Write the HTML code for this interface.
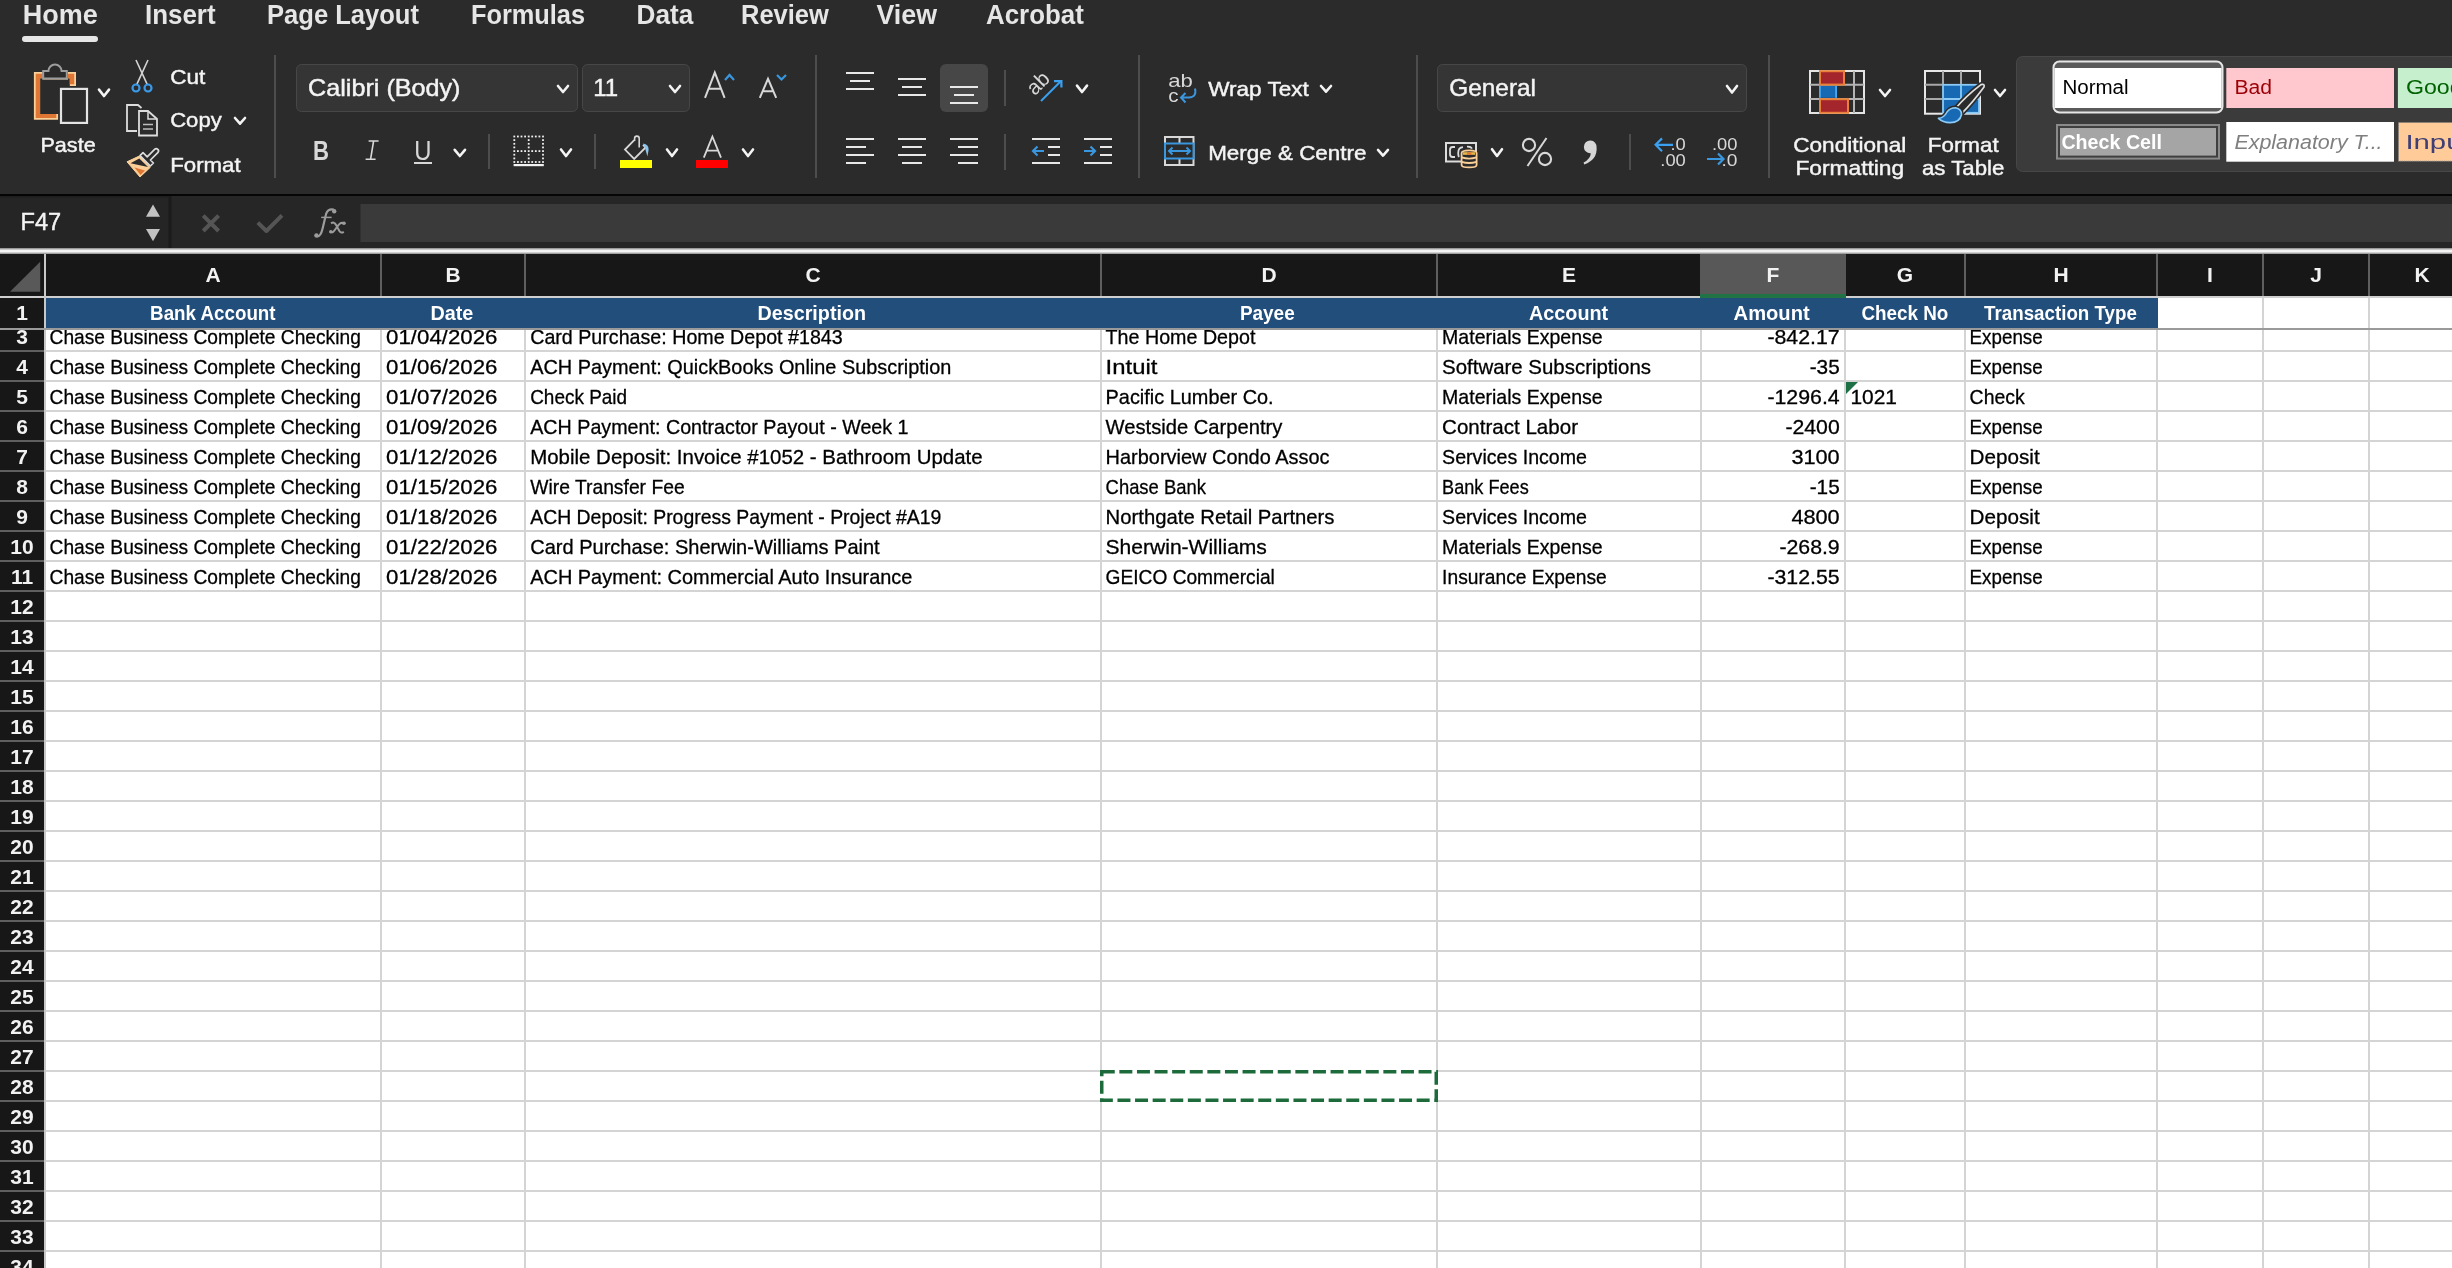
<!DOCTYPE html>
<html><head><meta charset="utf-8"><title>Excel</title>
<style>html,body{margin:0;padding:0;background:#2b2b2b;width:2452px;height:1268px;overflow:hidden}
text{white-space:pre}</style></head>
<body><svg width="2452" height="1268" viewBox="0 0 2452 1268" style="display:block;will-change:transform"><defs><clipPath id="cellclip"><rect x="0" y="330" width="2452" height="938"/></clipPath><clipPath id="rowclip"><rect x="0" y="330" width="44" height="20"/></clipPath></defs><rect x="0" y="0" width="2452" height="194" fill="#2b2b2b" />
<rect x="0" y="194" width="2452" height="2" fill="#050505" />
<rect x="0" y="196" width="2452" height="52" fill="#262626" />
<text x="22.7" y="24.0" font-family="Liberation Sans" font-size="27" font-weight="bold" font-style="normal" fill="#e6e6e6" textLength="75.0" lengthAdjust="spacingAndGlyphs" >Home</text>
<text x="145.0" y="24.0" font-family="Liberation Sans" font-size="27" font-weight="bold" font-style="normal" fill="#e6e6e6" textLength="70.6" lengthAdjust="spacingAndGlyphs" >Insert</text>
<text x="267.0" y="24.0" font-family="Liberation Sans" font-size="27" font-weight="bold" font-style="normal" fill="#e6e6e6" textLength="152.0" lengthAdjust="spacingAndGlyphs" >Page Layout</text>
<text x="470.9" y="24.0" font-family="Liberation Sans" font-size="27" font-weight="bold" font-style="normal" fill="#e6e6e6" textLength="114.2" lengthAdjust="spacingAndGlyphs" >Formulas</text>
<text x="636.6" y="24.0" font-family="Liberation Sans" font-size="27" font-weight="bold" font-style="normal" fill="#e6e6e6" textLength="56.7" lengthAdjust="spacingAndGlyphs" >Data</text>
<text x="741.0" y="24.0" font-family="Liberation Sans" font-size="27" font-weight="bold" font-style="normal" fill="#e6e6e6" textLength="87.8" lengthAdjust="spacingAndGlyphs" >Review</text>
<text x="876.5" y="24.0" font-family="Liberation Sans" font-size="27" font-weight="bold" font-style="normal" fill="#e6e6e6" textLength="60.5" lengthAdjust="spacingAndGlyphs" >View</text>
<text x="986.0" y="24.0" font-family="Liberation Sans" font-size="27" font-weight="bold" font-style="normal" fill="#e6e6e6" textLength="97.8" lengthAdjust="spacingAndGlyphs" >Acrobat</text>
<rect x="22" y="36" width="76" height="6" rx="3" fill="#e6e6e6"/>
<path d="M33.9 72 H42.5 V79.5 H68 V72 H76 V86 H69.8 V78.2 H40.1 V113.9 H58.1 V119.8 H33.9 Z" fill="#fbcf98"/>
<path d="M35.7 73.8 H42.5 V78.2 H40.1 V113.9 H56.3 V118 H35.7 Z M68 73.8 H74.2 V84.3 H69.8 V78.2 H68 Z" fill="#e07634"/>
<path d="M43.2 78.5 V71.1 H48.4 A6.6 6.6 0 0 1 61.6 71.1 H66.8 V78.5 Z" fill="#2b2b2b" stroke="#9d9d9d" stroke-width="2"/>
<rect x="61" y="88.9" width="26" height="34" fill="#2b2b2b" stroke="#e4e4e4" stroke-width="2.2"/>
<polyline points="99,89.6 104.0,96 109,89.6" fill="none" stroke="#f4f4f4" stroke-width="2.6" stroke-linecap="round" stroke-linejoin="round"/>
<text x="40.4" y="151.6" font-family="Liberation Sans" font-size="21" font-weight="normal" font-style="normal" fill="#f4f4f4" stroke="#f4f4f4" stroke-width="0.45" textLength="55.3" lengthAdjust="spacingAndGlyphs" >Paste</text>
<path d="M136 60 L147.2 84.4 M148 60 L136.8 84.4" stroke="#d4d4d4" stroke-width="1.6" fill="none"/>
<circle cx="136" cy="88" r="3.5" fill="#2b2b2b" stroke="#3a9ae8" stroke-width="2.2"/>
<circle cx="148" cy="88" r="3.5" fill="#2b2b2b" stroke="#3a9ae8" stroke-width="2.2"/>
<text x="170.2" y="83.7" font-family="Liberation Sans" font-size="21" font-weight="normal" font-style="normal" fill="#f4f4f4" stroke="#f4f4f4" stroke-width="0.45" textLength="35.1" lengthAdjust="spacingAndGlyphs" >Cut</text>
<path d="M137 131 H127 V105 H138 L141.5 108" fill="none" stroke="#dcdcdc" stroke-width="1.8"/>
<path d="M139 111 H148 L157 119 V135.5 H139 Z" fill="#2b2b2b" stroke="#dcdcdc" stroke-width="1.8"/>
<path d="M148 111 V119 H157" fill="none" stroke="#dcdcdc" stroke-width="1.5"/>
<path d="M143 124.5 H153 M143 129 H153" stroke="#bdbdbd" stroke-width="1.6"/>
<text x="170.2" y="127.3" font-family="Liberation Sans" font-size="21" font-weight="normal" font-style="normal" fill="#f4f4f4" stroke="#f4f4f4" stroke-width="0.45" textLength="51.5" lengthAdjust="spacingAndGlyphs" >Copy</text>
<polyline points="235,118 240.0,123.7 245,118" fill="none" stroke="#f4f4f4" stroke-width="2.6" stroke-linecap="round" stroke-linejoin="round"/>
<path d="M127 161.8 L139.2 156.1 L150.2 167.4 L140 177 Z" fill="#fbcf98" stroke="#fbcf98" stroke-width="1" stroke-linejoin="round"/>
<path d="M130.5 163.2 L139.3 158.6 L148 166.9 Z" fill="#2b2b2b"/>
<path d="M134.5 167.6 L145 170.5 L140.5 175 Z" fill="#e07634"/>
<path d="M140 155.6 L143 152.6 L147.2 156.8 L154.6 149.4 Q156.2 147.8 157.8 149.4 Q159.4 151 157.8 152.6 L150.4 160 L153.4 163 L150.4 166 Z" fill="#2b2b2b" stroke="#dcdcdc" stroke-width="1.7" stroke-linejoin="round"/>
<text x="170.2" y="171.9" font-family="Liberation Sans" font-size="21" font-weight="normal" font-style="normal" fill="#f4f4f4" stroke="#f4f4f4" stroke-width="0.45" textLength="70.5" lengthAdjust="spacingAndGlyphs" >Format</text>
<rect x="274" y="55" width="2" height="123" fill="#4d4d4d" />
<rect x="296.5" y="64.5" width="281" height="47" rx="5" fill="#353535" stroke="#474747" stroke-width="1"/>
<text x="308.1" y="96.0" font-family="Liberation Sans" font-size="24" font-weight="normal" font-style="normal" fill="#f4f4f4" stroke="#f4f4f4" stroke-width="0.45" textLength="152.4" lengthAdjust="spacingAndGlyphs" >Calibri (Body)</text>
<polyline points="558,86 563.0,92 568,86" fill="none" stroke="#f4f4f4" stroke-width="2.6" stroke-linecap="round" stroke-linejoin="round"/>
<rect x="582.5" y="64.5" width="107" height="47" rx="5" fill="#353535" stroke="#474747" stroke-width="1"/>
<text x="593.2" y="96.4" font-family="Liberation Sans" font-size="24" font-weight="normal" font-style="normal" fill="#f4f4f4" stroke="#f4f4f4" stroke-width="0.45" >11</text>
<polyline points="670,86 675.0,92 680,86" fill="none" stroke="#f4f4f4" stroke-width="2.6" stroke-linecap="round" stroke-linejoin="round"/>
<path d="M705 97.8 L714.8 72.6 L724.6 97.8 M708.6 88.8 H721" fill="none" stroke="#d8d8d8" stroke-width="2"/>
<polyline points="725,80 729.5,75 734,80" fill="none" stroke="#3a96dd" stroke-width="2.2"/>
<path d="M759.8 97.8 L768 78.8 L776.2 97.8 M762.8 91.2 H773.2" fill="none" stroke="#d8d8d8" stroke-width="2"/>
<polyline points="777,75 781.5,79.5 786,75" fill="none" stroke="#3a96dd" stroke-width="2.2"/>
<text x="312.9" y="160.0" font-family="Liberation Sans" font-size="28" font-weight="bold" font-style="normal" fill="#d8d8d8" textLength="16.0" lengthAdjust="spacingAndGlyphs" >B</text>
<path d="M368.6 141 H378.6 M365.6 159.2 H375.6 M373.6 141 L370.6 159.2" fill="none" stroke="#d8d8d8" stroke-width="1.6"/>
<text x="414.2" y="159.6" font-family="Liberation Sans" font-size="27" font-weight="normal" font-style="normal" fill="#d8d8d8" textLength="17.2" lengthAdjust="spacingAndGlyphs" >U</text>
<rect x="414" y="162" width="18" height="2" fill="#d8d8d8" />
<polyline points="454.7,149.8 459.85,156 465,149.8" fill="none" stroke="#f4f4f4" stroke-width="2.6" stroke-linecap="round" stroke-linejoin="round"/>
<rect x="488" y="134" width="2" height="35" fill="#4d4d4d" />
<rect x="513.4" y="135.6" width="1.8" height="1.8" fill="#f0f0f0" />
<rect x="513.4" y="139.2" width="1.8" height="1.8" fill="#f0f0f0" />
<rect x="513.4" y="142.9" width="1.8" height="1.8" fill="#f0f0f0" />
<rect x="513.4" y="146.5" width="1.8" height="1.8" fill="#f0f0f0" />
<rect x="513.4" y="150.2" width="1.8" height="1.8" fill="#f0f0f0" />
<rect x="513.4" y="153.8" width="1.8" height="1.8" fill="#f0f0f0" />
<rect x="513.4" y="157.5" width="1.8" height="1.8" fill="#f0f0f0" />
<rect x="513.4" y="161.1" width="1.8" height="1.8" fill="#f0f0f0" />
<rect x="517.0" y="135.6" width="1.8" height="1.8" fill="#f0f0f0" />
<rect x="517.0" y="150.2" width="1.8" height="1.8" fill="#f0f0f0" />
<rect x="517.0" y="161.1" width="1.8" height="1.8" fill="#f0f0f0" />
<rect x="520.6" y="135.6" width="1.8" height="1.8" fill="#f0f0f0" />
<rect x="520.6" y="150.2" width="1.8" height="1.8" fill="#f0f0f0" />
<rect x="520.6" y="161.1" width="1.8" height="1.8" fill="#f0f0f0" />
<rect x="524.2" y="135.6" width="1.8" height="1.8" fill="#f0f0f0" />
<rect x="524.2" y="150.2" width="1.8" height="1.8" fill="#f0f0f0" />
<rect x="524.2" y="161.1" width="1.8" height="1.8" fill="#f0f0f0" />
<rect x="527.8" y="135.6" width="1.8" height="1.8" fill="#f0f0f0" />
<rect x="527.8" y="139.2" width="1.8" height="1.8" fill="#f0f0f0" />
<rect x="527.8" y="142.9" width="1.8" height="1.8" fill="#f0f0f0" />
<rect x="527.8" y="146.5" width="1.8" height="1.8" fill="#f0f0f0" />
<rect x="527.8" y="150.2" width="1.8" height="1.8" fill="#f0f0f0" />
<rect x="527.8" y="153.8" width="1.8" height="1.8" fill="#f0f0f0" />
<rect x="527.8" y="157.5" width="1.8" height="1.8" fill="#f0f0f0" />
<rect x="527.8" y="161.1" width="1.8" height="1.8" fill="#f0f0f0" />
<rect x="531.3" y="135.6" width="1.8" height="1.8" fill="#f0f0f0" />
<rect x="531.3" y="150.2" width="1.8" height="1.8" fill="#f0f0f0" />
<rect x="531.3" y="161.1" width="1.8" height="1.8" fill="#f0f0f0" />
<rect x="534.9" y="135.6" width="1.8" height="1.8" fill="#f0f0f0" />
<rect x="534.9" y="150.2" width="1.8" height="1.8" fill="#f0f0f0" />
<rect x="534.9" y="161.1" width="1.8" height="1.8" fill="#f0f0f0" />
<rect x="538.5" y="135.6" width="1.8" height="1.8" fill="#f0f0f0" />
<rect x="538.5" y="150.2" width="1.8" height="1.8" fill="#f0f0f0" />
<rect x="538.5" y="161.1" width="1.8" height="1.8" fill="#f0f0f0" />
<rect x="542.1" y="135.6" width="1.8" height="1.8" fill="#f0f0f0" />
<rect x="542.1" y="139.2" width="1.8" height="1.8" fill="#f0f0f0" />
<rect x="542.1" y="142.9" width="1.8" height="1.8" fill="#f0f0f0" />
<rect x="542.1" y="146.5" width="1.8" height="1.8" fill="#f0f0f0" />
<rect x="542.1" y="150.2" width="1.8" height="1.8" fill="#f0f0f0" />
<rect x="542.1" y="153.8" width="1.8" height="1.8" fill="#f0f0f0" />
<rect x="542.1" y="157.5" width="1.8" height="1.8" fill="#f0f0f0" />
<rect x="542.1" y="161.1" width="1.8" height="1.8" fill="#f0f0f0" />
<rect x="513.6" y="164" width="30.2" height="2.2" fill="#f2f2f2" />
<polyline points="561,149.5 566.0,156 571,149.5" fill="none" stroke="#f4f4f4" stroke-width="2.6" stroke-linecap="round" stroke-linejoin="round"/>
<rect x="594" y="134" width="2" height="35" fill="#4d4d4d" />
<path d="M634.2 140.2 L625 149.6 L634.2 158.9 L645.6 147.5 L643 144.9" fill="none" stroke="#d8d8d8" stroke-width="1.8" stroke-linejoin="miter"/>
<path d="M634.6 141 V138.4 A2.3 2.3 0 0 1 639.2 138.4 V147.4" fill="none" stroke="#d8d8d8" stroke-width="1.6"/>
<path d="M643.2 143.6 Q648.8 144.2 648.6 150 L647.4 156.4 Q645.8 150 643.2 143.6 Z" fill="#8cc4ec"/>
<rect x="620" y="160" width="32" height="8" fill="#ffff00" />
<polyline points="667,149.5 672.0,156 677,149.5" fill="none" stroke="#f4f4f4" stroke-width="2.6" stroke-linecap="round" stroke-linejoin="round"/>
<path d="M703.8 157.6 L712.4 136.6 L721 157.6 M706.8 150.6 H718" fill="none" stroke="#d8d8d8" stroke-width="1.8"/>
<rect x="696" y="160" width="32" height="8" fill="#ff0000" />
<polyline points="743,149.5 748.0,156 753,149.5" fill="none" stroke="#f4f4f4" stroke-width="2.6" stroke-linecap="round" stroke-linejoin="round"/>
<rect x="815" y="55" width="2" height="123" fill="#4d4d4d" />
<rect x="846" y="72" width="28" height="2" fill="#e8e8e8" />
<rect x="850" y="80" width="20" height="2" fill="#e8e8e8" />
<rect x="846" y="88" width="28" height="2" fill="#e8e8e8" />
<rect x="898" y="78" width="28" height="2" fill="#e8e8e8" />
<rect x="902" y="86" width="20" height="2" fill="#e8e8e8" />
<rect x="898" y="94" width="28" height="2" fill="#e8e8e8" />
<rect x="940" y="64" width="48" height="48" rx="6" fill="#474747"/>
<rect x="950" y="86" width="28" height="2" fill="#e8e8e8" />
<rect x="954" y="94" width="20" height="2" fill="#e8e8e8" />
<rect x="950" y="102" width="28" height="2" fill="#e8e8e8" />
<rect x="1004" y="70" width="2" height="36" fill="#4d4d4d" />
<text x="0" y="0" font-family="Liberation Sans" font-size="21" fill="#d8d8d8" textLength="23" lengthAdjust="spacingAndGlyphs" transform="translate(1034.8 96.2) rotate(-45)">ab</text>
<path d="M1041 101 L1060.5 81.5" stroke="#3aa0ef" stroke-width="2" fill="none"/>
<polyline points="1054,81.2 1061.4,81.2 1061.4,87.6" fill="none" stroke="#3aa0ef" stroke-width="2.2"/>
<polyline points="1077,85.6 1082.0,92 1087,85.6" fill="none" stroke="#f4f4f4" stroke-width="2.6" stroke-linecap="round" stroke-linejoin="round"/>
<rect x="846" y="138" width="28" height="2" fill="#e8e8e8" />
<rect x="846" y="146" width="20" height="2" fill="#e8e8e8" />
<rect x="846" y="154" width="28" height="2" fill="#e8e8e8" />
<rect x="846" y="162" width="20" height="2" fill="#e8e8e8" />
<rect x="898" y="138" width="28" height="2" fill="#e8e8e8" />
<rect x="902" y="146" width="20" height="2" fill="#e8e8e8" />
<rect x="898" y="154" width="28" height="2" fill="#e8e8e8" />
<rect x="902" y="162" width="20" height="2" fill="#e8e8e8" />
<rect x="950" y="138" width="28" height="2" fill="#e8e8e8" />
<rect x="958" y="146" width="20" height="2" fill="#e8e8e8" />
<rect x="950" y="154" width="28" height="2" fill="#e8e8e8" />
<rect x="958" y="162" width="20" height="2" fill="#e8e8e8" />
<rect x="1004" y="134" width="2" height="36" fill="#4d4d4d" />
<rect x="1032" y="138" width="28" height="2" fill="#e8e8e8" />
<rect x="1048" y="146" width="12" height="2" fill="#e8e8e8" />
<rect x="1048" y="154" width="12" height="2" fill="#e8e8e8" />
<rect x="1032" y="162" width="28" height="2" fill="#e8e8e8" />
<path d="M1033 151 H1044 M1037.5 146.5 L1033 151 L1037.5 155.5" stroke="#3a96dd" stroke-width="2.2" fill="none"/>
<rect x="1084" y="138" width="28" height="2" fill="#e8e8e8" />
<rect x="1100" y="146" width="12" height="2" fill="#e8e8e8" />
<rect x="1100" y="154" width="12" height="2" fill="#e8e8e8" />
<rect x="1084" y="162" width="28" height="2" fill="#e8e8e8" />
<path d="M1084 151 H1095 M1090.5 146.5 L1095 151 L1090.5 155.5" stroke="#3a96dd" stroke-width="2.2" fill="none"/>
<rect x="1138" y="55" width="2" height="123" fill="#4d4d4d" />
<text x="1168.2" y="87.0" font-family="Liberation Sans" font-size="19" font-weight="normal" font-style="normal" fill="#d8d8d8" textLength="24.6" lengthAdjust="spacingAndGlyphs" >ab</text>
<text x="1168.2" y="101.8" font-family="Liberation Sans" font-size="19" font-weight="normal" font-style="normal" fill="#d8d8d8" textLength="10.3" lengthAdjust="spacingAndGlyphs" >c</text>
<path d="M1195 88.5 Q1197 97 1189 97.5 H1181 M1185.5 93 L1181 97.5 L1185.5 102.5" stroke="#3a96dd" stroke-width="2" fill="none"/>
<text x="1208.2" y="95.5" font-family="Liberation Sans" font-size="21" font-weight="normal" font-style="normal" fill="#f4f4f4" stroke="#f4f4f4" stroke-width="0.45" textLength="100.5" lengthAdjust="spacingAndGlyphs" >Wrap Text</text>
<polyline points="1321,86 1326.0,91.7 1331,86" fill="none" stroke="#f4f4f4" stroke-width="2.6" stroke-linecap="round" stroke-linejoin="round"/>
<rect x="1165" y="137" width="28.5" height="28" fill="none" stroke="#d8d8d8" stroke-width="2"/>
<rect x="1178.5" y="137" width="2" height="28" fill="#d8d8d8" />
<rect x="1165" y="143.5" width="28.5" height="15" fill="#2b2b2b" stroke="#3a96dd" stroke-width="2"/>
<path d="M1169 151 H1190 M1172.5 147.5 L1169 151 L1172.5 154.5 M1186.5 147.5 L1190 151 L1186.5 154.5" stroke="#3a96dd" stroke-width="2" fill="none"/>
<text x="1208.2" y="159.5" font-family="Liberation Sans" font-size="21" font-weight="normal" font-style="normal" fill="#f4f4f4" stroke="#f4f4f4" stroke-width="0.45" textLength="158.3" lengthAdjust="spacingAndGlyphs" >Merge &amp; Centre</text>
<polyline points="1378,149.9 1383.0,155.6 1388,149.9" fill="none" stroke="#f4f4f4" stroke-width="2.6" stroke-linecap="round" stroke-linejoin="round"/>
<rect x="1416" y="55" width="2" height="123" fill="#4d4d4d" />
<rect x="1437.5" y="64.5" width="309" height="47" rx="5" fill="#353535" stroke="#474747" stroke-width="1"/>
<text x="1449.3" y="96.1" font-family="Liberation Sans" font-size="24" font-weight="normal" font-style="normal" fill="#f4f4f4" stroke="#f4f4f4" stroke-width="0.45" textLength="86.7" lengthAdjust="spacingAndGlyphs" >General</text>
<polyline points="1727,86 1732.0,92.5 1737,86" fill="none" stroke="#f4f4f4" stroke-width="2.6" stroke-linecap="round" stroke-linejoin="round"/>
<rect x="1446" y="143" width="30" height="18.5" fill="none" stroke="#dcdcdc" stroke-width="2"/>
<path d="M1455 147 H1452.5 Q1450 147 1450 150 V154 Q1450 157 1452.5 157 H1455" fill="none" stroke="#dcdcdc" stroke-width="1.8"/>
<path d="M1463 147.2 Q1458.2 147.5 1458.2 153 Q1458.2 156 1459 157" fill="none" stroke="#dcdcdc" stroke-width="1.8"/>
<path d="M1467 146.6 Q1471 146.4 1472 148.6" fill="none" stroke="#dcdcdc" stroke-width="1.6"/>
<path d="M1461.6 153 V165 Q1461.6 167.4 1469.2 167.4 Q1476.6 167.4 1476.6 165 V153 Q1476.6 150.4 1469.2 150.4 Q1461.6 150.4 1461.6 153 Z" fill="#2b2b2b" stroke="#fbcf98" stroke-width="1.8"/>
<path d="M1461.6 157.4 Q1469.2 159.8 1476.6 157.4 M1461.6 161.8 Q1469.2 164.2 1476.6 161.8" fill="none" stroke="#fbcf98" stroke-width="1.8"/>
<rect x="1463" y="152.2" width="12" height="2.6" fill="#e8b84a"/><rect x="1467" y="152.2" width="4.4" height="2.6" fill="#e07634"/>
<polyline points="1492,149.2 1497.0,156 1502,149.2" fill="none" stroke="#f4f4f4" stroke-width="2.6" stroke-linecap="round" stroke-linejoin="round"/>
<circle cx="1529" cy="145" r="6.1" fill="none" stroke="#d8d8d8" stroke-width="2.1"/><circle cx="1545" cy="159" r="6.1" fill="none" stroke="#d8d8d8" stroke-width="2.1"/><path d="M1546.5 138 L1527.5 166" stroke="#d8d8d8" stroke-width="2"/>
<path d="M1596.6 147.5 Q1597.5 159.5 1584.2 164.6 L1583.6 162.6 Q1590.6 158.6 1590.8 153.2 A6.4 6.4 0 1 1 1596.6 147.5 Z" fill="#d6d6d6"/>
<rect x="1629" y="134" width="2" height="36" fill="#4d4d4d" />
<path d="M1656 144.8 H1673 M1662 138.4 L1655.6 144.8 L1662 151.2" stroke="#3aa0ef" stroke-width="2.2" fill="none"/>
<text x="1670.5" y="149.8" font-family="Liberation Sans" font-size="17" font-weight="normal" font-style="normal" fill="#d8d8d8" textLength="15.3" lengthAdjust="spacingAndGlyphs" >.0</text>
<text x="1660.3" y="166.1" font-family="Liberation Sans" font-size="17" font-weight="normal" font-style="normal" fill="#d8d8d8" textLength="25.5" lengthAdjust="spacingAndGlyphs" >.00</text>
<text x="1712.0" y="149.8" font-family="Liberation Sans" font-size="17" font-weight="normal" font-style="normal" fill="#d8d8d8" textLength="25.5" lengthAdjust="spacingAndGlyphs" >.00</text>
<path d="M1707 159 H1723 M1718 153.5 L1723.5 159 L1718 164.5" stroke="#3a96dd" stroke-width="2.2" fill="none"/>
<text x="1721.5" y="165.8" font-family="Liberation Sans" font-size="17" font-weight="normal" font-style="normal" fill="#d8d8d8" textLength="16.0" lengthAdjust="spacingAndGlyphs" >.0</text>
<rect x="1768" y="55" width="2" height="123" fill="#4d4d4d" />
<rect x="1810" y="71" width="54" height="42" fill="none" stroke="#e4e4e4" stroke-width="2"/>
<path d="M1854 71 V113 M1810 84.8 H1864 M1810 98.9 H1864" stroke="#b4b4b4" stroke-width="2"/>
<rect x="1820" y="71.2" width="24" height="13.4" fill="#a4262c" stroke="#e8803a" stroke-width="2"/>
<rect x="1819" y="86" width="18" height="11.8" fill="#1769b3"/>
<rect x="1819" y="86" width="1.8" height="11.8" fill="#4aa8f0"/><rect x="1835.2" y="86" width="1.8" height="11.8" fill="#4aa8f0"/>
<rect x="1820" y="99.2" width="28" height="13.6" fill="#a4262c" stroke="#e8803a" stroke-width="2"/>
<polyline points="1880,90 1885.0,96 1890,90" fill="none" stroke="#f4f4f4" stroke-width="2.6" stroke-linecap="round" stroke-linejoin="round"/>
<text x="1793.2" y="151.7" font-family="Liberation Sans" font-size="21" font-weight="normal" font-style="normal" fill="#f4f4f4" stroke="#f4f4f4" stroke-width="0.45" textLength="113.1" lengthAdjust="spacingAndGlyphs" >Conditional</text>
<text x="1795.4" y="175.3" font-family="Liberation Sans" font-size="21" font-weight="normal" font-style="normal" fill="#f4f4f4" stroke="#f4f4f4" stroke-width="0.45" textLength="108.8" lengthAdjust="spacingAndGlyphs" >Formatting</text>
<rect x="1925" y="71" width="55" height="42.7" fill="none" stroke="#e8e8e8" stroke-width="2"/>
<path d="M1943 71 V84 M1961 71 V84 M1925 84.8 H1942 M1925 99 H1942" stroke="#a8a8a8" stroke-width="2"/>
<rect x="1943" y="84.8" width="36" height="28" fill="#1769b3" stroke="#8ccaf5" stroke-width="1.8"/>
<path d="M1961 84.8 V113 M1943 99 H1979" stroke="#8ccaf5" stroke-width="1.8"/>
<path d="M1956 108 Q1966 96 1981 84.6 Q1985 83.4 1984 87 Q1973 102 1962 113.2 Z" fill="#2b2b2b" stroke="#2b2b2b" stroke-width="5" stroke-linejoin="round"/>
<path d="M1956 108 Q1966 96 1981 84.6 Q1985 83.4 1984 87 Q1973 102 1962 113.2 Z" fill="#2b2b2b" stroke="#e0e0e0" stroke-width="1.7" stroke-linejoin="round"/>
<path d="M1938.4 118.4 Q1944 118 1947 112 Q1950 107.8 1955.5 107.8 Q1961.5 109 1961.5 114.5 Q1960 122.5 1950 122.6 Q1943 122.6 1938.4 118.4 Z" fill="#2b2b2b" stroke="#2b2b2b" stroke-width="4.5" stroke-linejoin="round"/>
<path d="M1938.4 118.4 Q1944 118 1947 112 Q1950 107.8 1955.5 107.8 Q1961.5 109 1961.5 114.5 Q1960 122.5 1950 122.6 Q1943 122.6 1938.4 118.4 Z" fill="#1769b3" stroke="#8ccaf5" stroke-width="1.6" stroke-linejoin="round"/>
<polyline points="1995,90 2000.0,96 2005,90" fill="none" stroke="#f4f4f4" stroke-width="2.6" stroke-linecap="round" stroke-linejoin="round"/>
<text x="1927.8" y="151.7" font-family="Liberation Sans" font-size="21" font-weight="normal" font-style="normal" fill="#f4f4f4" stroke="#f4f4f4" stroke-width="0.45" textLength="70.8" lengthAdjust="spacingAndGlyphs" >Format</text>
<text x="1922.0" y="175.3" font-family="Liberation Sans" font-size="21" font-weight="normal" font-style="normal" fill="#f4f4f4" stroke="#f4f4f4" stroke-width="0.45" textLength="82.4" lengthAdjust="spacingAndGlyphs" >as Table</text>
<rect x="2016.5" y="56.5" width="460" height="115" rx="6" fill="#3b3b3b" stroke="#474747" stroke-width="1"/>
<rect x="2053.5" y="61.5" width="169" height="51" rx="6" fill="#5a5a5a" stroke="#e6e6e6" stroke-width="2"/>
<rect x="2054.5" y="68" width="167" height="40" fill="#ffffff" />
<text x="2062.4" y="93.8" font-family="Liberation Sans" font-size="20" font-weight="normal" font-style="normal" fill="#000000" textLength="66.2" lengthAdjust="spacingAndGlyphs" >Normal</text>
<rect x="2226.3" y="68" width="167.7" height="40" fill="#ffc7ce" />
<text x="2234.4" y="93.8" font-family="Liberation Sans" font-size="20" font-weight="normal" font-style="normal" fill="#9c0006" textLength="37.6" lengthAdjust="spacingAndGlyphs" >Bad</text>
<rect x="2397.9" y="68" width="60" height="40" fill="#c6efce" />
<text x="2405.9" y="93.8" font-family="Liberation Sans" font-size="20" font-weight="normal" font-style="normal" fill="#006100" textLength="56.7" lengthAdjust="spacingAndGlyphs" >Good</text>
<rect x="2056" y="124" width="164" height="35.6" fill="#8a8a8a" />
<rect x="2058" y="126" width="160" height="31.6" fill="#3f3f3f" />
<rect x="2060" y="128" width="156" height="27.6" fill="#a5a5a5" />
<text x="2061.4" y="148.8" font-family="Liberation Sans" font-size="20" font-weight="bold" font-style="normal" fill="#ffffff" textLength="100.6" lengthAdjust="spacingAndGlyphs" >Check Cell</text>
<rect x="2226.3" y="122" width="167.7" height="39.7" fill="#ffffff" />
<text x="2234.4" y="148.8" font-family="Liberation Sans" font-size="20" font-weight="normal" font-style="italic" fill="#7f7f7f" textLength="148.2" lengthAdjust="spacingAndGlyphs" >Explanatory T...</text>
<rect x="2398.5" y="122.5" width="60" height="38.7" fill="#ffcc99" stroke="#7f7f7f" stroke-width="1" stroke-dasharray="1 1"/>
<text x="2405.4" y="148.8" font-family="Liberation Sans" font-size="20" font-weight="normal" font-style="normal" fill="#3f3f76" textLength="65.2" lengthAdjust="spacingAndGlyphs" >Input</text>
<rect x="0" y="196" width="169" height="52" fill="#252525" />
<rect x="168.5" y="196" width="3" height="52" fill="#1b1b1b" />
<rect x="0" y="196" width="169" height="1.5" fill="#1e1e1e" />
<text x="20.5" y="229.9" font-family="Liberation Sans" font-size="24" font-weight="normal" font-style="normal" fill="#f4f4f4" stroke="#f4f4f4" stroke-width="0.45" textLength="40.6" lengthAdjust="spacingAndGlyphs" >F47</text>
<path d="M146 216.8 L153 204.6 L160 216.8 Z" fill="#c2c2c2"/>
<path d="M146 229 L153 241.3 L160 229 Z" fill="#c2c2c2"/>
<path d="M203.2 215.6 L218.6 231 M218.6 215.6 L203.2 231" stroke="#555555" stroke-width="4"/>
<path d="M257.8 222.6 L266.4 231 L282 215.4" fill="none" stroke="#555555" stroke-width="4" stroke-linejoin="round"/>
<path d="M316.5 236.4 Q320.6 237.2 322.6 228.5 L326.2 213.6 Q328 208.6 333.8 209.6" fill="none" stroke="#9c9c9c" stroke-width="2.2"/>
<circle cx="316.4" cy="235.4" r="2.2" fill="#9c9c9c"/><circle cx="334.2" cy="211.2" r="2.2" fill="#9c9c9c"/>
<path d="M321.2 217.4 H331.6" stroke="#9c9c9c" stroke-width="1.5"/>
<path d="M331 223.4 Q334 221.4 335.8 224.4 L339.4 231 Q341 233.6 343.8 231.8 M344 223.6 Q341.4 221.8 338.8 224.6 L334.6 230.2 Q332.6 233.4 330.4 231.8" fill="none" stroke="#9c9c9c" stroke-width="2"/>
<circle cx="344" cy="223.2" r="1.8" fill="#9c9c9c"/><circle cx="330.8" cy="231.8" r="1.8" fill="#9c9c9c"/>
<rect x="360.5" y="204" width="2091.5" height="38" fill="#3a3a3a" />
<rect x="0" y="248" width="2452" height="1" fill="#9a9a9a" />
<rect x="0" y="249" width="2452" height="1" fill="#c8c8c8" />
<rect x="0" y="250" width="2452" height="2" fill="#f2f2f2" />
<rect x="0" y="252" width="2452" height="1" fill="#cfcfcf" />
<rect x="0" y="253" width="2452" height="1" fill="#a0a0a0" />
<rect x="0" y="254" width="2452" height="42" fill="#171717" />
<rect x="0" y="296" width="2452" height="2" fill="#cfcfcf" />
<path d="M10 291.8 L40.2 291.8 L40.2 261.8 Z" fill="#595959"/>
<rect x="44" y="254" width="2" height="42" fill="#c8c8c8" />
<rect x="1700" y="254" width="146" height="40" fill="#585858" />
<text x="213.0" y="282.0" font-family="Liberation Sans" font-size="21" font-weight="bold" font-style="normal" fill="#f2f2f2" text-anchor="middle" >A</text>
<rect x="380" y="254" width="2" height="42" fill="#5f5f5f" />
<text x="453.0" y="282.0" font-family="Liberation Sans" font-size="21" font-weight="bold" font-style="normal" fill="#f2f2f2" text-anchor="middle" >B</text>
<rect x="524" y="254" width="2" height="42" fill="#5f5f5f" />
<text x="813.0" y="282.0" font-family="Liberation Sans" font-size="21" font-weight="bold" font-style="normal" fill="#f2f2f2" text-anchor="middle" >C</text>
<rect x="1100" y="254" width="2" height="42" fill="#5f5f5f" />
<text x="1269.0" y="282.0" font-family="Liberation Sans" font-size="21" font-weight="bold" font-style="normal" fill="#f2f2f2" text-anchor="middle" >D</text>
<rect x="1436" y="254" width="2" height="42" fill="#5f5f5f" />
<text x="1569.0" y="282.0" font-family="Liberation Sans" font-size="21" font-weight="bold" font-style="normal" fill="#f2f2f2" text-anchor="middle" >E</text>
<rect x="1700" y="254" width="2" height="40" fill="#5f5f5f" />
<text x="1773.0" y="282.0" font-family="Liberation Sans" font-size="21" font-weight="bold" font-style="normal" fill="#f2f2f2" text-anchor="middle" >F</text>
<rect x="1844" y="254" width="2" height="40" fill="#5f5f5f" />
<text x="1905.0" y="282.0" font-family="Liberation Sans" font-size="21" font-weight="bold" font-style="normal" fill="#f2f2f2" text-anchor="middle" >G</text>
<rect x="1964" y="254" width="2" height="42" fill="#5f5f5f" />
<text x="2061.0" y="282.0" font-family="Liberation Sans" font-size="21" font-weight="bold" font-style="normal" fill="#f2f2f2" text-anchor="middle" >H</text>
<rect x="2156" y="254" width="2" height="42" fill="#5f5f5f" />
<text x="2210.0" y="282.0" font-family="Liberation Sans" font-size="21" font-weight="bold" font-style="normal" fill="#f2f2f2" text-anchor="middle" >I</text>
<rect x="2262" y="254" width="2" height="42" fill="#5f5f5f" />
<text x="2316.0" y="282.0" font-family="Liberation Sans" font-size="21" font-weight="bold" font-style="normal" fill="#f2f2f2" text-anchor="middle" >J</text>
<rect x="2368" y="254" width="2" height="42" fill="#5f5f5f" />
<text x="2422.0" y="282.0" font-family="Liberation Sans" font-size="21" font-weight="bold" font-style="normal" fill="#f2f2f2" text-anchor="middle" >K</text>
<rect x="1700" y="254" width="2" height="40" fill="#585858" />
<rect x="1844" y="254" width="2" height="40" fill="#585858" />
<rect x="1700" y="294" width="146" height="4" fill="#217346" />
<rect x="46" y="298" width="2406" height="970" fill="#ffffff" />
<rect x="0" y="298" width="44" height="970" fill="#171717" />
<rect x="44" y="254" width="2" height="1014" fill="#c8c8c8" />
<rect x="46" y="350" width="2406" height="2" fill="#d4d4d4" />
<rect x="0" y="350" width="44" height="2" fill="#5f5f5f" />
<rect x="46" y="380" width="2406" height="2" fill="#d4d4d4" />
<rect x="0" y="380" width="44" height="2" fill="#5f5f5f" />
<rect x="46" y="410" width="2406" height="2" fill="#d4d4d4" />
<rect x="0" y="410" width="44" height="2" fill="#5f5f5f" />
<rect x="46" y="440" width="2406" height="2" fill="#d4d4d4" />
<rect x="0" y="440" width="44" height="2" fill="#5f5f5f" />
<rect x="46" y="470" width="2406" height="2" fill="#d4d4d4" />
<rect x="0" y="470" width="44" height="2" fill="#5f5f5f" />
<rect x="46" y="500" width="2406" height="2" fill="#d4d4d4" />
<rect x="0" y="500" width="44" height="2" fill="#5f5f5f" />
<rect x="46" y="530" width="2406" height="2" fill="#d4d4d4" />
<rect x="0" y="530" width="44" height="2" fill="#5f5f5f" />
<rect x="46" y="560" width="2406" height="2" fill="#d4d4d4" />
<rect x="0" y="560" width="44" height="2" fill="#5f5f5f" />
<rect x="46" y="590" width="2406" height="2" fill="#d4d4d4" />
<rect x="0" y="590" width="44" height="2" fill="#5f5f5f" />
<rect x="46" y="620" width="2406" height="2" fill="#d4d4d4" />
<rect x="0" y="620" width="44" height="2" fill="#5f5f5f" />
<rect x="46" y="650" width="2406" height="2" fill="#d4d4d4" />
<rect x="0" y="650" width="44" height="2" fill="#5f5f5f" />
<rect x="46" y="680" width="2406" height="2" fill="#d4d4d4" />
<rect x="0" y="680" width="44" height="2" fill="#5f5f5f" />
<rect x="46" y="710" width="2406" height="2" fill="#d4d4d4" />
<rect x="0" y="710" width="44" height="2" fill="#5f5f5f" />
<rect x="46" y="740" width="2406" height="2" fill="#d4d4d4" />
<rect x="0" y="740" width="44" height="2" fill="#5f5f5f" />
<rect x="46" y="770" width="2406" height="2" fill="#d4d4d4" />
<rect x="0" y="770" width="44" height="2" fill="#5f5f5f" />
<rect x="46" y="800" width="2406" height="2" fill="#d4d4d4" />
<rect x="0" y="800" width="44" height="2" fill="#5f5f5f" />
<rect x="46" y="830" width="2406" height="2" fill="#d4d4d4" />
<rect x="0" y="830" width="44" height="2" fill="#5f5f5f" />
<rect x="46" y="860" width="2406" height="2" fill="#d4d4d4" />
<rect x="0" y="860" width="44" height="2" fill="#5f5f5f" />
<rect x="46" y="890" width="2406" height="2" fill="#d4d4d4" />
<rect x="0" y="890" width="44" height="2" fill="#5f5f5f" />
<rect x="46" y="920" width="2406" height="2" fill="#d4d4d4" />
<rect x="0" y="920" width="44" height="2" fill="#5f5f5f" />
<rect x="46" y="950" width="2406" height="2" fill="#d4d4d4" />
<rect x="0" y="950" width="44" height="2" fill="#5f5f5f" />
<rect x="46" y="980" width="2406" height="2" fill="#d4d4d4" />
<rect x="0" y="980" width="44" height="2" fill="#5f5f5f" />
<rect x="46" y="1010" width="2406" height="2" fill="#d4d4d4" />
<rect x="0" y="1010" width="44" height="2" fill="#5f5f5f" />
<rect x="46" y="1040" width="2406" height="2" fill="#d4d4d4" />
<rect x="0" y="1040" width="44" height="2" fill="#5f5f5f" />
<rect x="46" y="1070" width="2406" height="2" fill="#d4d4d4" />
<rect x="0" y="1070" width="44" height="2" fill="#5f5f5f" />
<rect x="46" y="1100" width="2406" height="2" fill="#d4d4d4" />
<rect x="0" y="1100" width="44" height="2" fill="#5f5f5f" />
<rect x="46" y="1130" width="2406" height="2" fill="#d4d4d4" />
<rect x="0" y="1130" width="44" height="2" fill="#5f5f5f" />
<rect x="46" y="1160" width="2406" height="2" fill="#d4d4d4" />
<rect x="0" y="1160" width="44" height="2" fill="#5f5f5f" />
<rect x="46" y="1190" width="2406" height="2" fill="#d4d4d4" />
<rect x="0" y="1190" width="44" height="2" fill="#5f5f5f" />
<rect x="46" y="1220" width="2406" height="2" fill="#d4d4d4" />
<rect x="0" y="1220" width="44" height="2" fill="#5f5f5f" />
<rect x="46" y="1250" width="2406" height="2" fill="#d4d4d4" />
<rect x="0" y="1250" width="44" height="2" fill="#5f5f5f" />
<rect x="46" y="1280" width="2406" height="2" fill="#d4d4d4" />
<rect x="0" y="1280" width="44" height="2" fill="#5f5f5f" />
<rect x="380" y="298" width="2" height="970" fill="#d4d4d4" />
<rect x="524" y="298" width="2" height="970" fill="#d4d4d4" />
<rect x="1100" y="298" width="2" height="970" fill="#d4d4d4" />
<rect x="1436" y="298" width="2" height="970" fill="#d4d4d4" />
<rect x="1700" y="298" width="2" height="970" fill="#d4d4d4" />
<rect x="1844" y="298" width="2" height="970" fill="#d4d4d4" />
<rect x="1964" y="298" width="2" height="970" fill="#d4d4d4" />
<rect x="2156" y="298" width="2" height="970" fill="#d4d4d4" />
<rect x="2262" y="298" width="2" height="970" fill="#d4d4d4" />
<rect x="2368" y="298" width="2" height="970" fill="#d4d4d4" />
<rect x="46" y="298" width="2112" height="30" fill="#224e7b" />
<rect x="0" y="328" width="2452" height="2" fill="#9a9a9a" />
<text x="22.0" y="320.0" font-family="Liberation Sans" font-size="21" font-weight="bold" font-style="normal" fill="#f2f2f2" text-anchor="middle" >1</text>
<text x="22.0" y="344.0" font-family="Liberation Sans" font-size="21" font-weight="bold" font-style="normal" fill="#f2f2f2" text-anchor="middle" clip-path="url(#rowclip)">3</text>
<text x="22.0" y="374.0" font-family="Liberation Sans" font-size="21" font-weight="bold" font-style="normal" fill="#f2f2f2" text-anchor="middle" >4</text>
<text x="22.0" y="404.0" font-family="Liberation Sans" font-size="21" font-weight="bold" font-style="normal" fill="#f2f2f2" text-anchor="middle" >5</text>
<text x="22.0" y="434.0" font-family="Liberation Sans" font-size="21" font-weight="bold" font-style="normal" fill="#f2f2f2" text-anchor="middle" >6</text>
<text x="22.0" y="464.0" font-family="Liberation Sans" font-size="21" font-weight="bold" font-style="normal" fill="#f2f2f2" text-anchor="middle" >7</text>
<text x="22.0" y="494.0" font-family="Liberation Sans" font-size="21" font-weight="bold" font-style="normal" fill="#f2f2f2" text-anchor="middle" >8</text>
<text x="22.0" y="524.0" font-family="Liberation Sans" font-size="21" font-weight="bold" font-style="normal" fill="#f2f2f2" text-anchor="middle" >9</text>
<text x="22.0" y="554.0" font-family="Liberation Sans" font-size="21" font-weight="bold" font-style="normal" fill="#f2f2f2" text-anchor="middle" >10</text>
<text x="22.0" y="584.0" font-family="Liberation Sans" font-size="21" font-weight="bold" font-style="normal" fill="#f2f2f2" text-anchor="middle" >11</text>
<text x="22.0" y="614.0" font-family="Liberation Sans" font-size="21" font-weight="bold" font-style="normal" fill="#f2f2f2" text-anchor="middle" >12</text>
<text x="22.0" y="644.0" font-family="Liberation Sans" font-size="21" font-weight="bold" font-style="normal" fill="#f2f2f2" text-anchor="middle" >13</text>
<text x="22.0" y="674.0" font-family="Liberation Sans" font-size="21" font-weight="bold" font-style="normal" fill="#f2f2f2" text-anchor="middle" >14</text>
<text x="22.0" y="704.0" font-family="Liberation Sans" font-size="21" font-weight="bold" font-style="normal" fill="#f2f2f2" text-anchor="middle" >15</text>
<text x="22.0" y="734.0" font-family="Liberation Sans" font-size="21" font-weight="bold" font-style="normal" fill="#f2f2f2" text-anchor="middle" >16</text>
<text x="22.0" y="764.0" font-family="Liberation Sans" font-size="21" font-weight="bold" font-style="normal" fill="#f2f2f2" text-anchor="middle" >17</text>
<text x="22.0" y="794.0" font-family="Liberation Sans" font-size="21" font-weight="bold" font-style="normal" fill="#f2f2f2" text-anchor="middle" >18</text>
<text x="22.0" y="824.0" font-family="Liberation Sans" font-size="21" font-weight="bold" font-style="normal" fill="#f2f2f2" text-anchor="middle" >19</text>
<text x="22.0" y="854.0" font-family="Liberation Sans" font-size="21" font-weight="bold" font-style="normal" fill="#f2f2f2" text-anchor="middle" >20</text>
<text x="22.0" y="884.0" font-family="Liberation Sans" font-size="21" font-weight="bold" font-style="normal" fill="#f2f2f2" text-anchor="middle" >21</text>
<text x="22.0" y="914.0" font-family="Liberation Sans" font-size="21" font-weight="bold" font-style="normal" fill="#f2f2f2" text-anchor="middle" >22</text>
<text x="22.0" y="944.0" font-family="Liberation Sans" font-size="21" font-weight="bold" font-style="normal" fill="#f2f2f2" text-anchor="middle" >23</text>
<text x="22.0" y="974.0" font-family="Liberation Sans" font-size="21" font-weight="bold" font-style="normal" fill="#f2f2f2" text-anchor="middle" >24</text>
<text x="22.0" y="1004.0" font-family="Liberation Sans" font-size="21" font-weight="bold" font-style="normal" fill="#f2f2f2" text-anchor="middle" >25</text>
<text x="22.0" y="1034.0" font-family="Liberation Sans" font-size="21" font-weight="bold" font-style="normal" fill="#f2f2f2" text-anchor="middle" >26</text>
<text x="22.0" y="1064.0" font-family="Liberation Sans" font-size="21" font-weight="bold" font-style="normal" fill="#f2f2f2" text-anchor="middle" >27</text>
<text x="22.0" y="1094.0" font-family="Liberation Sans" font-size="21" font-weight="bold" font-style="normal" fill="#f2f2f2" text-anchor="middle" >28</text>
<text x="22.0" y="1124.0" font-family="Liberation Sans" font-size="21" font-weight="bold" font-style="normal" fill="#f2f2f2" text-anchor="middle" >29</text>
<text x="22.0" y="1154.0" font-family="Liberation Sans" font-size="21" font-weight="bold" font-style="normal" fill="#f2f2f2" text-anchor="middle" >30</text>
<text x="22.0" y="1184.0" font-family="Liberation Sans" font-size="21" font-weight="bold" font-style="normal" fill="#f2f2f2" text-anchor="middle" >31</text>
<text x="22.0" y="1214.0" font-family="Liberation Sans" font-size="21" font-weight="bold" font-style="normal" fill="#f2f2f2" text-anchor="middle" >32</text>
<text x="22.0" y="1244.0" font-family="Liberation Sans" font-size="21" font-weight="bold" font-style="normal" fill="#f2f2f2" text-anchor="middle" >33</text>
<text x="22.0" y="1274.0" font-family="Liberation Sans" font-size="21" font-weight="bold" font-style="normal" fill="#f2f2f2" text-anchor="middle" >34</text>
<text x="150.1" y="320.0" font-family="Liberation Sans" font-size="21" font-weight="bold" font-style="normal" fill="#ffffff" textLength="125.5" lengthAdjust="spacingAndGlyphs" >Bank Account</text>
<text x="430.4" y="320.0" font-family="Liberation Sans" font-size="21" font-weight="bold" font-style="normal" fill="#ffffff" textLength="42.9" lengthAdjust="spacingAndGlyphs" >Date</text>
<text x="757.6" y="320.0" font-family="Liberation Sans" font-size="21" font-weight="bold" font-style="normal" fill="#ffffff" textLength="108.4" lengthAdjust="spacingAndGlyphs" >Description</text>
<text x="1239.9" y="320.0" font-family="Liberation Sans" font-size="21" font-weight="bold" font-style="normal" fill="#ffffff" textLength="54.8" lengthAdjust="spacingAndGlyphs" >Payee</text>
<text x="1529.0" y="320.0" font-family="Liberation Sans" font-size="21" font-weight="bold" font-style="normal" fill="#ffffff" textLength="79.2" lengthAdjust="spacingAndGlyphs" >Account</text>
<text x="1733.6" y="320.0" font-family="Liberation Sans" font-size="21" font-weight="bold" font-style="normal" fill="#ffffff" textLength="76.1" lengthAdjust="spacingAndGlyphs" >Amount</text>
<text x="1861.4" y="320.0" font-family="Liberation Sans" font-size="21" font-weight="bold" font-style="normal" fill="#ffffff" textLength="86.9" lengthAdjust="spacingAndGlyphs" >Check No</text>
<text x="1984.1" y="320.0" font-family="Liberation Sans" font-size="21" font-weight="bold" font-style="normal" fill="#ffffff" textLength="152.8" lengthAdjust="spacingAndGlyphs" >Transaction Type</text>
<g clip-path="url(#cellclip)">
<text x="49.6" y="344.0" font-family="Liberation Sans" font-size="21" font-weight="normal" font-style="normal" fill="#000" stroke="#000" stroke-width="0.3" textLength="311.2" lengthAdjust="spacingAndGlyphs" >Chase Business Complete Checking</text>
<text x="386.1" y="344.0" font-family="Liberation Sans" font-size="21" font-weight="normal" font-style="normal" fill="#000" stroke="#000" stroke-width="0.3" textLength="111.4" lengthAdjust="spacingAndGlyphs" >01/04/2026</text>
<text x="530.2" y="344.0" font-family="Liberation Sans" font-size="21" font-weight="normal" font-style="normal" fill="#000" stroke="#000" stroke-width="0.3" textLength="312.5" lengthAdjust="spacingAndGlyphs" >Card Purchase: Home Depot #1843</text>
<text x="1105.6" y="344.0" font-family="Liberation Sans" font-size="21" font-weight="normal" font-style="normal" fill="#000" stroke="#000" stroke-width="0.3" textLength="149.8" lengthAdjust="spacingAndGlyphs" >The Home Depot</text>
<text x="1442.1" y="344.0" font-family="Liberation Sans" font-size="21" font-weight="normal" font-style="normal" fill="#000" stroke="#000" stroke-width="0.3" textLength="160.6" lengthAdjust="spacingAndGlyphs" >Materials Expense</text>
<text x="1767.4" y="344.0" font-family="Liberation Sans" font-size="21" font-weight="normal" font-style="normal" fill="#000" stroke="#000" stroke-width="0.3" textLength="72.3" lengthAdjust="spacingAndGlyphs" >-842.17</text>
<text x="1969.6" y="344.0" font-family="Liberation Sans" font-size="21" font-weight="normal" font-style="normal" fill="#000" stroke="#000" stroke-width="0.3" textLength="73.1" lengthAdjust="spacingAndGlyphs" >Expense</text>
<text x="49.6" y="374.0" font-family="Liberation Sans" font-size="21" font-weight="normal" font-style="normal" fill="#000" stroke="#000" stroke-width="0.3" textLength="311.2" lengthAdjust="spacingAndGlyphs" >Chase Business Complete Checking</text>
<text x="386.1" y="374.0" font-family="Liberation Sans" font-size="21" font-weight="normal" font-style="normal" fill="#000" stroke="#000" stroke-width="0.3" textLength="111.4" lengthAdjust="spacingAndGlyphs" >01/06/2026</text>
<text x="530.2" y="374.0" font-family="Liberation Sans" font-size="21" font-weight="normal" font-style="normal" fill="#000" stroke="#000" stroke-width="0.3" textLength="421.2" lengthAdjust="spacingAndGlyphs" >ACH Payment: QuickBooks Online Subscription</text>
<text x="1105.6" y="374.0" font-family="Liberation Sans" font-size="21" font-weight="normal" font-style="normal" fill="#000" stroke="#000" stroke-width="0.3" textLength="51.8" lengthAdjust="spacingAndGlyphs" >Intuit</text>
<text x="1442.1" y="374.0" font-family="Liberation Sans" font-size="21" font-weight="normal" font-style="normal" fill="#000" stroke="#000" stroke-width="0.3" textLength="208.9" lengthAdjust="spacingAndGlyphs" >Software Subscriptions</text>
<text x="1809.7" y="374.0" font-family="Liberation Sans" font-size="21" font-weight="normal" font-style="normal" fill="#000" stroke="#000" stroke-width="0.3" textLength="30.0" lengthAdjust="spacingAndGlyphs" >-35</text>
<text x="1969.6" y="374.0" font-family="Liberation Sans" font-size="21" font-weight="normal" font-style="normal" fill="#000" stroke="#000" stroke-width="0.3" textLength="73.1" lengthAdjust="spacingAndGlyphs" >Expense</text>
<text x="49.6" y="404.0" font-family="Liberation Sans" font-size="21" font-weight="normal" font-style="normal" fill="#000" stroke="#000" stroke-width="0.3" textLength="311.2" lengthAdjust="spacingAndGlyphs" >Chase Business Complete Checking</text>
<text x="386.1" y="404.0" font-family="Liberation Sans" font-size="21" font-weight="normal" font-style="normal" fill="#000" stroke="#000" stroke-width="0.3" textLength="111.4" lengthAdjust="spacingAndGlyphs" >01/07/2026</text>
<text x="530.2" y="404.0" font-family="Liberation Sans" font-size="21" font-weight="normal" font-style="normal" fill="#000" stroke="#000" stroke-width="0.3" textLength="96.9" lengthAdjust="spacingAndGlyphs" >Check Paid</text>
<text x="1105.6" y="404.0" font-family="Liberation Sans" font-size="21" font-weight="normal" font-style="normal" fill="#000" stroke="#000" stroke-width="0.3" textLength="168.0" lengthAdjust="spacingAndGlyphs" >Pacific Lumber Co.</text>
<text x="1442.1" y="404.0" font-family="Liberation Sans" font-size="21" font-weight="normal" font-style="normal" fill="#000" stroke="#000" stroke-width="0.3" textLength="160.6" lengthAdjust="spacingAndGlyphs" >Materials Expense</text>
<text x="1767.4" y="404.0" font-family="Liberation Sans" font-size="21" font-weight="normal" font-style="normal" fill="#000" stroke="#000" stroke-width="0.3" textLength="72.3" lengthAdjust="spacingAndGlyphs" >-1296.4</text>
<text x="1850.4" y="404.0" font-family="Liberation Sans" font-size="21" font-weight="normal" font-style="normal" fill="#000" stroke="#000" stroke-width="0.3" textLength="46.6" lengthAdjust="spacingAndGlyphs" >1021</text>
<text x="1969.6" y="404.0" font-family="Liberation Sans" font-size="21" font-weight="normal" font-style="normal" fill="#000" stroke="#000" stroke-width="0.3" textLength="55.1" lengthAdjust="spacingAndGlyphs" >Check</text>
<text x="49.6" y="434.0" font-family="Liberation Sans" font-size="21" font-weight="normal" font-style="normal" fill="#000" stroke="#000" stroke-width="0.3" textLength="311.2" lengthAdjust="spacingAndGlyphs" >Chase Business Complete Checking</text>
<text x="386.1" y="434.0" font-family="Liberation Sans" font-size="21" font-weight="normal" font-style="normal" fill="#000" stroke="#000" stroke-width="0.3" textLength="111.4" lengthAdjust="spacingAndGlyphs" >01/09/2026</text>
<text x="530.2" y="434.0" font-family="Liberation Sans" font-size="21" font-weight="normal" font-style="normal" fill="#000" stroke="#000" stroke-width="0.3" textLength="378.4" lengthAdjust="spacingAndGlyphs" >ACH Payment: Contractor Payout - Week 1</text>
<text x="1105.6" y="434.0" font-family="Liberation Sans" font-size="21" font-weight="normal" font-style="normal" fill="#000" stroke="#000" stroke-width="0.3" textLength="176.7" lengthAdjust="spacingAndGlyphs" >Westside Carpentry</text>
<text x="1442.1" y="434.0" font-family="Liberation Sans" font-size="21" font-weight="normal" font-style="normal" fill="#000" stroke="#000" stroke-width="0.3" textLength="135.9" lengthAdjust="spacingAndGlyphs" >Contract Labor</text>
<text x="1785.4" y="434.0" font-family="Liberation Sans" font-size="21" font-weight="normal" font-style="normal" fill="#000" stroke="#000" stroke-width="0.3" textLength="54.3" lengthAdjust="spacingAndGlyphs" >-2400</text>
<text x="1969.6" y="434.0" font-family="Liberation Sans" font-size="21" font-weight="normal" font-style="normal" fill="#000" stroke="#000" stroke-width="0.3" textLength="73.1" lengthAdjust="spacingAndGlyphs" >Expense</text>
<text x="49.6" y="464.0" font-family="Liberation Sans" font-size="21" font-weight="normal" font-style="normal" fill="#000" stroke="#000" stroke-width="0.3" textLength="311.2" lengthAdjust="spacingAndGlyphs" >Chase Business Complete Checking</text>
<text x="386.1" y="464.0" font-family="Liberation Sans" font-size="21" font-weight="normal" font-style="normal" fill="#000" stroke="#000" stroke-width="0.3" textLength="111.4" lengthAdjust="spacingAndGlyphs" >01/12/2026</text>
<text x="530.2" y="464.0" font-family="Liberation Sans" font-size="21" font-weight="normal" font-style="normal" fill="#000" stroke="#000" stroke-width="0.3" textLength="452.5" lengthAdjust="spacingAndGlyphs" >Mobile Deposit: Invoice #1052 - Bathroom Update</text>
<text x="1105.6" y="464.0" font-family="Liberation Sans" font-size="21" font-weight="normal" font-style="normal" fill="#000" stroke="#000" stroke-width="0.3" textLength="223.9" lengthAdjust="spacingAndGlyphs" >Harborview Condo Assoc</text>
<text x="1442.1" y="464.0" font-family="Liberation Sans" font-size="21" font-weight="normal" font-style="normal" fill="#000" stroke="#000" stroke-width="0.3" textLength="144.9" lengthAdjust="spacingAndGlyphs" >Services Income</text>
<text x="1791.4" y="464.0" font-family="Liberation Sans" font-size="21" font-weight="normal" font-style="normal" fill="#000" stroke="#000" stroke-width="0.3" textLength="48.3" lengthAdjust="spacingAndGlyphs" >3100</text>
<text x="1969.6" y="464.0" font-family="Liberation Sans" font-size="21" font-weight="normal" font-style="normal" fill="#000" stroke="#000" stroke-width="0.3" textLength="70.1" lengthAdjust="spacingAndGlyphs" >Deposit</text>
<text x="49.6" y="494.0" font-family="Liberation Sans" font-size="21" font-weight="normal" font-style="normal" fill="#000" stroke="#000" stroke-width="0.3" textLength="311.2" lengthAdjust="spacingAndGlyphs" >Chase Business Complete Checking</text>
<text x="386.1" y="494.0" font-family="Liberation Sans" font-size="21" font-weight="normal" font-style="normal" fill="#000" stroke="#000" stroke-width="0.3" textLength="111.4" lengthAdjust="spacingAndGlyphs" >01/15/2026</text>
<text x="530.2" y="494.0" font-family="Liberation Sans" font-size="21" font-weight="normal" font-style="normal" fill="#000" stroke="#000" stroke-width="0.3" textLength="154.5" lengthAdjust="spacingAndGlyphs" >Wire Transfer Fee</text>
<text x="1105.6" y="494.0" font-family="Liberation Sans" font-size="21" font-weight="normal" font-style="normal" fill="#000" stroke="#000" stroke-width="0.3" textLength="100.3" lengthAdjust="spacingAndGlyphs" >Chase Bank</text>
<text x="1442.1" y="494.0" font-family="Liberation Sans" font-size="21" font-weight="normal" font-style="normal" fill="#000" stroke="#000" stroke-width="0.3" textLength="86.6" lengthAdjust="spacingAndGlyphs" >Bank Fees</text>
<text x="1809.7" y="494.0" font-family="Liberation Sans" font-size="21" font-weight="normal" font-style="normal" fill="#000" stroke="#000" stroke-width="0.3" textLength="30.0" lengthAdjust="spacingAndGlyphs" >-15</text>
<text x="1969.6" y="494.0" font-family="Liberation Sans" font-size="21" font-weight="normal" font-style="normal" fill="#000" stroke="#000" stroke-width="0.3" textLength="73.1" lengthAdjust="spacingAndGlyphs" >Expense</text>
<text x="49.6" y="524.0" font-family="Liberation Sans" font-size="21" font-weight="normal" font-style="normal" fill="#000" stroke="#000" stroke-width="0.3" textLength="311.2" lengthAdjust="spacingAndGlyphs" >Chase Business Complete Checking</text>
<text x="386.1" y="524.0" font-family="Liberation Sans" font-size="21" font-weight="normal" font-style="normal" fill="#000" stroke="#000" stroke-width="0.3" textLength="111.4" lengthAdjust="spacingAndGlyphs" >01/18/2026</text>
<text x="530.2" y="524.0" font-family="Liberation Sans" font-size="21" font-weight="normal" font-style="normal" fill="#000" stroke="#000" stroke-width="0.3" textLength="411.1" lengthAdjust="spacingAndGlyphs" >ACH Deposit: Progress Payment - Project #A19</text>
<text x="1105.6" y="524.0" font-family="Liberation Sans" font-size="21" font-weight="normal" font-style="normal" fill="#000" stroke="#000" stroke-width="0.3" textLength="228.9" lengthAdjust="spacingAndGlyphs" >Northgate Retail Partners</text>
<text x="1442.1" y="524.0" font-family="Liberation Sans" font-size="21" font-weight="normal" font-style="normal" fill="#000" stroke="#000" stroke-width="0.3" textLength="144.9" lengthAdjust="spacingAndGlyphs" >Services Income</text>
<text x="1791.4" y="524.0" font-family="Liberation Sans" font-size="21" font-weight="normal" font-style="normal" fill="#000" stroke="#000" stroke-width="0.3" textLength="48.3" lengthAdjust="spacingAndGlyphs" >4800</text>
<text x="1969.6" y="524.0" font-family="Liberation Sans" font-size="21" font-weight="normal" font-style="normal" fill="#000" stroke="#000" stroke-width="0.3" textLength="70.1" lengthAdjust="spacingAndGlyphs" >Deposit</text>
<text x="49.6" y="554.0" font-family="Liberation Sans" font-size="21" font-weight="normal" font-style="normal" fill="#000" stroke="#000" stroke-width="0.3" textLength="311.2" lengthAdjust="spacingAndGlyphs" >Chase Business Complete Checking</text>
<text x="386.1" y="554.0" font-family="Liberation Sans" font-size="21" font-weight="normal" font-style="normal" fill="#000" stroke="#000" stroke-width="0.3" textLength="111.4" lengthAdjust="spacingAndGlyphs" >01/22/2026</text>
<text x="530.2" y="554.0" font-family="Liberation Sans" font-size="21" font-weight="normal" font-style="normal" fill="#000" stroke="#000" stroke-width="0.3" textLength="349.5" lengthAdjust="spacingAndGlyphs" >Card Purchase: Sherwin-Williams Paint</text>
<text x="1105.6" y="554.0" font-family="Liberation Sans" font-size="21" font-weight="normal" font-style="normal" fill="#000" stroke="#000" stroke-width="0.3" textLength="161.3" lengthAdjust="spacingAndGlyphs" >Sherwin-Williams</text>
<text x="1442.1" y="554.0" font-family="Liberation Sans" font-size="21" font-weight="normal" font-style="normal" fill="#000" stroke="#000" stroke-width="0.3" textLength="160.6" lengthAdjust="spacingAndGlyphs" >Materials Expense</text>
<text x="1779.4" y="554.0" font-family="Liberation Sans" font-size="21" font-weight="normal" font-style="normal" fill="#000" stroke="#000" stroke-width="0.3" textLength="60.3" lengthAdjust="spacingAndGlyphs" >-268.9</text>
<text x="1969.6" y="554.0" font-family="Liberation Sans" font-size="21" font-weight="normal" font-style="normal" fill="#000" stroke="#000" stroke-width="0.3" textLength="73.1" lengthAdjust="spacingAndGlyphs" >Expense</text>
<text x="49.6" y="584.0" font-family="Liberation Sans" font-size="21" font-weight="normal" font-style="normal" fill="#000" stroke="#000" stroke-width="0.3" textLength="311.2" lengthAdjust="spacingAndGlyphs" >Chase Business Complete Checking</text>
<text x="386.1" y="584.0" font-family="Liberation Sans" font-size="21" font-weight="normal" font-style="normal" fill="#000" stroke="#000" stroke-width="0.3" textLength="111.4" lengthAdjust="spacingAndGlyphs" >01/28/2026</text>
<text x="530.2" y="584.0" font-family="Liberation Sans" font-size="21" font-weight="normal" font-style="normal" fill="#000" stroke="#000" stroke-width="0.3" textLength="382.2" lengthAdjust="spacingAndGlyphs" >ACH Payment: Commercial Auto Insurance</text>
<text x="1105.6" y="584.0" font-family="Liberation Sans" font-size="21" font-weight="normal" font-style="normal" fill="#000" stroke="#000" stroke-width="0.3" textLength="169.2" lengthAdjust="spacingAndGlyphs" >GEICO Commercial</text>
<text x="1442.1" y="584.0" font-family="Liberation Sans" font-size="21" font-weight="normal" font-style="normal" fill="#000" stroke="#000" stroke-width="0.3" textLength="164.6" lengthAdjust="spacingAndGlyphs" >Insurance Expense</text>
<text x="1767.4" y="584.0" font-family="Liberation Sans" font-size="21" font-weight="normal" font-style="normal" fill="#000" stroke="#000" stroke-width="0.3" textLength="72.3" lengthAdjust="spacingAndGlyphs" >-312.55</text>
<text x="1969.6" y="584.0" font-family="Liberation Sans" font-size="21" font-weight="normal" font-style="normal" fill="#000" stroke="#000" stroke-width="0.3" textLength="73.1" lengthAdjust="spacingAndGlyphs" >Expense</text>
</g>
<path d="M1846 382 H1858 L1846 394 Z" fill="#1e7145"/>
<rect x="1101.75" y="1071.75" width="334.5" height="28.5" fill="none" stroke="#ffffff" stroke-width="3.5"/>
<rect x="1101.75" y="1071.75" width="334.5" height="28.5" fill="none" stroke="#1d6b3a" stroke-width="3.5" stroke-dasharray="13 4.6"/></svg></body></html>
